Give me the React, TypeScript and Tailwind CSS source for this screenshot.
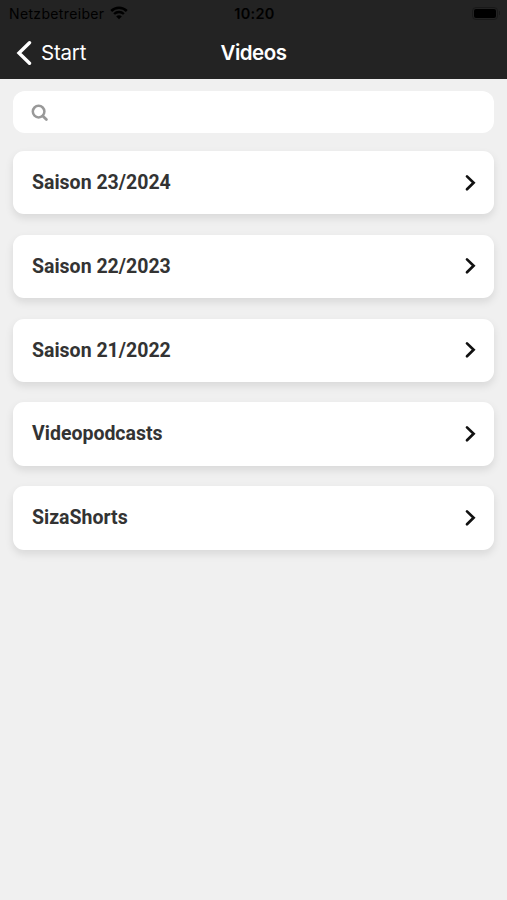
const categories = [
  "Saison 23/2024",
  "Saison 22/2023",
  "Saison 21/2022",
  "Videopodcasts",
  "SizaShorts",
];

function StatusBar() {
  return (
    <div className="grid h-[27px] grid-cols-3 items-center pt-px pr-[7px] pl-[9px] text-black">
      <div className="flex items-center gap-[6px] text-[14px] leading-none tracking-[0.35px]">
        <span>Netzbetreiber</span>
        <svg width="18" height="14" viewBox="0 0 18 14" fill="none" className="-mt-[2px] shrink-0">
          <path d="M1.2 5C5.6.7 12.4.7 16.8 5" stroke="currentColor" strokeWidth="2.5" />
          <path d="M4.1 8c2.8-2.7 7-2.7 9.8 0" stroke="currentColor" strokeWidth="2.4" />
          <path d="M9 13.2 6.2 10.4c1.6-1.5 4-1.5 5.6 0L9 13.2Z" fill="currentColor" />
        </svg>
      </div>
      <span className="text-center text-[14.5px] leading-none font-semibold tracking-[0.3px]">
        10:20
      </span>
      <div className="-mt-[2px] flex items-center justify-end gap-px">
        <div className="h-[13px] w-[26px] rounded-[4px] border border-[#191919] p-px">
          <div className="h-full rounded-[2px] bg-black" />
        </div>
        <div className="h-[4px] w-px rounded-r bg-[#191919]" />
      </div>
    </div>
  );
}

function NavBar() {
  return (
    <div className="grid h-[52px] grid-cols-3 items-center px-[16px] text-white">
      <button className="flex items-center gap-[9px] text-[20.5px] leading-none tracking-[-0.2px]">
        <svg width="16" height="24" viewBox="0 0 16 24" fill="none" className="-mt-px">
          <path d="M13.5 1.8 3 12l10.5 10.2" stroke="currentColor" strokeWidth="3.4" strokeLinecap="round" strokeLinejoin="miter" />
        </svg>
        Start
      </button>
      <h1 className="text-center text-[20.5px] leading-none font-semibold tracking-[-0.5px]">Videos</h1>
    </div>
  );
}

function CategoryCard({ title }: { title: string }) {
  return (
    <button className="flex h-[63.4px] w-full items-center justify-between rounded-[11px] bg-white pr-[17px] pl-[19px] text-left shadow-[0_4px_8px_rgba(0,0,0,0.1)]">
      <span className="font-[Roboto,sans-serif] text-[19.5px] leading-none font-bold text-[#333]">
        {title}
      </span>
      <svg width="13" height="18" viewBox="0 0 13 18" fill="none" className="text-[#111]">
        <path d="M3 2.4 9.6 8.8 3 15.2" stroke="currentColor" strokeWidth="2.7" strokeLinecap="round" strokeLinejoin="miter" />
      </svg>
    </button>
  );
}

export default function App() {
  return (
    <div className="min-h-screen bg-[#f0f0f0] font-[Inter,sans-serif]">
      <header className="bg-[#232323]">
        <StatusBar />
        <NavBar />
      </header>
      <main className="px-[13px] pt-3">
        <label className="flex h-[42px] items-center rounded-[12px] bg-white pl-[18px]">
          <svg width="18" height="18" viewBox="0 0 18 18" fill="none" className="mt-px shrink-0 text-[#999]">
            <circle cx="7.6" cy="7.6" r="5.8" stroke="currentColor" strokeWidth="2.5" />
            <path d="m11.8 12 3.6 3.6" stroke="currentColor" strokeWidth="2.8" strokeLinecap="round" />
          </svg>
          <input type="search" aria-label="Suche" className="min-w-0 flex-1 bg-transparent px-2 outline-none" />
        </label>
        <div className="mt-[18px] flex flex-col gap-[20.4px]">
          {categories.map((title) => (
            <CategoryCard key={title} title={title} />
          ))}
        </div>
      </main>
    </div>
  );
}
